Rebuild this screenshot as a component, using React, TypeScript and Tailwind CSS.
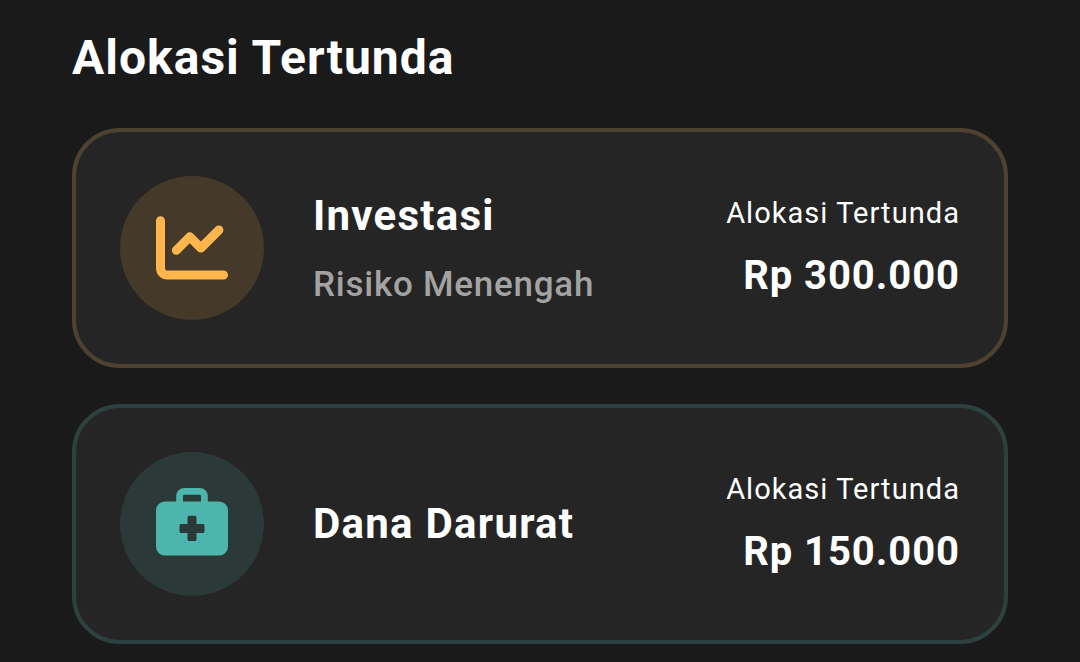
import React from "react";

type AllocationCardProps = {
  title: string;
  subtitle?: string;
  amount: string;
  icon: React.ReactNode;
  className: string;
  iconClassName: string;
};

function ChartIcon() {
  return (
    <svg
      viewBox="0 0 72 72"
      className="size-18"
      fill="none"
      stroke="currentColor"
      strokeWidth="9"
      strokeLinecap="round"
      strokeLinejoin="round"
    >
      <path d="M4.5 8.7V56.3a6.7 6.7 0 0 0 6.7 6.7H67.5" />
      <path d="M20.3 38.3 33.7 24.8 44.9 36 62.9 18" />
    </svg>
  );
}

function MedicalBagIcon() {
  return (
    <svg viewBox="0 0 72 72" className="size-18" fill="currentColor">
      <path
        fillRule="evenodd"
        d="M20.2 13.4V8a8 8 0 0 1 8-8H43.8a8 8 0 0 1 8 8V13.4H63a9 9 0 0 1 9 9V58.6a9 9 0 0 1-9 9H9a9 9 0 0 1-9-9V22.4a9 9 0 0 1 9-9ZM27 13.4H45V8a1.3 1.3 0 0 0-1.3-1.3H28.3A1.3 1.3 0 0 0 27 8ZM33 27.8a1.5 1.5 0 0 0-1.5 1.5V36H25a1.5 1.5 0 0 0-1.5 1.5V43.4a1.5 1.5 0 0 0 1.5 1.5H31.5V51.6a1.5 1.5 0 0 0 1.5 1.5H39a1.5 1.5 0 0 0 1.5-1.5V44.9H47a1.5 1.5 0 0 0 1.5-1.5V37.5A1.5 1.5 0 0 0 47 36H40.5V29.3A1.5 1.5 0 0 0 39 27.8Z"
      />
    </svg>
  );
}

function AllocationCard({
  title,
  subtitle,
  amount,
  icon,
  className,
  iconClassName,
}: AllocationCardProps) {
  return (
    <article
      className={`flex h-60 items-center rounded-[48px] border-4 bg-[#252525] px-11 ${className}`}
    >
      <div
        className={`flex size-36 shrink-0 items-center justify-center rounded-full ${iconClassName}`}
      >
        {icon}
      </div>
      <div className="ml-[49px] flex flex-1 flex-col gap-[14px]">
        <h2 className="text-[42px] leading-[60px] font-bold tracking-[1.25px]">
          {title}
        </h2>
        {subtitle && (
          <p className="text-[35px] leading-[50px] font-medium tracking-[0.75px] text-[#a3a3a3]">
            {subtitle}
          </p>
        )}
      </div>
      <div className="flex flex-col items-end gap-[10px]">
        <p className="text-[29px] leading-[46px] tracking-[1.05px]">
          Alokasi Tertunda
        </p>
        <p className="text-[40px] leading-[60px] font-bold tracking-[0.95px]">
          {amount}
        </p>
      </div>
    </article>
  );
}

export default function App() {
  return (
    <main className="h-[662px] overflow-hidden bg-[#1a1a1a] px-18 pt-[22px] font-['Roboto',sans-serif] whitespace-nowrap text-white">
      <h1 className="mb-[34px] text-[48px] leading-[72px] font-bold tracking-[1px]">
        Alokasi Tertunda
      </h1>
      <section className="flex flex-col gap-9">
        <AllocationCard
          title="Investasi"
          subtitle="Risiko Menengah"
          amount="Rp 300.000"
          icon={<ChartIcon />}
          className="border-[#4f4230]"
          iconClassName="bg-[#453929] text-[#ffb74d]"
        />
        <AllocationCard
          title="Dana Darurat"
          amount="Rp 150.000"
          icon={<MedicalBagIcon />}
          className="border-[#2d413f]"
          iconClassName="bg-[#2b3a38] text-[#4db6ac]"
        />
      </section>
    </main>
  );
}
